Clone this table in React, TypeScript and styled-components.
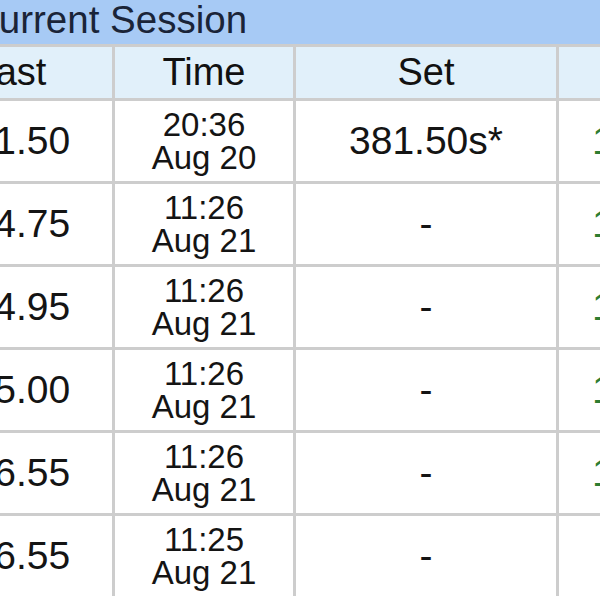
import React from "react";
import styled, { createGlobalStyle } from "styled-components";

const GlobalStyle = createGlobalStyle`
  html, body {
    margin: 0;
    padding: 0;
    background: #ffffff;
    overflow: hidden;
  }
  body {
    font-family: "Liberation Sans", Arial, Helvetica, sans-serif;
  }
`;

const Viewport = styled.div`
  width: 600px;
  height: 600px;
  overflow: hidden;
`;

const Panel = styled.section`
  margin-left: -91px;
  width: 840px;
  display: flex;
  flex-direction: column;
`;

const TitleBar = styled.div`
  height: 44px;
  line-height: 40px;
  padding-left: 62px;
  background: #a7caf5;
  color: #1a2438;
  font-size: 38.5px;
  white-space: nowrap;
`;

const Grid = styled.div`
  display: grid;
  grid-template-columns: 203px 178px 260px 220px;
  grid-auto-rows: 80px;
  grid-template-rows: 51px;
  gap: 3px;
  padding-top: 3px;
  background: #cdcdcd;
`;

const HeadCell = styled.div`
  background: #e1f0fa;
  color: #111111;
  font-size: 38px;
  display: flex;
  align-items: center;
  justify-content: center;
  white-space: nowrap;
`;

const Cell = styled.div<{ $tone?: "green" }>`
  background: #ffffff;
  color: ${(p) => (p.$tone === "green" ? "#2f7d32" : "#141414")};
  font-size: 39px;
  display: flex;
  align-items: center;
  justify-content: center;
  white-space: nowrap;
`;

const TimeCell = styled.div`
  background: #ffffff;
  color: #141414;
  font-size: 33px;
  line-height: 33px;
  display: flex;
  flex-direction: column;
  align-items: center;
  justify-content: center;
  white-space: nowrap;
`;

type Row = { last: string; time: string; date: string; set: string; gain: string };

const rows: Row[] = [
  { last: "381.50", time: "20:36", date: "Aug 20", set: "381.50s*", gain: "100.00%" },
  { last: "384.75", time: "11:26", date: "Aug 21", set: "-", gain: "100.85%" },
  { last: "384.95", time: "11:26", date: "Aug 21", set: "-", gain: "100.90%" },
  { last: "385.00", time: "11:26", date: "Aug 21", set: "-", gain: "100.92%" },
  { last: "386.55", time: "11:26", date: "Aug 21", set: "-", gain: "101.32%" },
  { last: "386.55", time: "11:25", date: "Aug 21", set: "-", gain: "" },
];

export default function App() {
  return (
    <Viewport>
      <GlobalStyle />
      <Panel>
        <TitleBar>Current Session</TitleBar>
        <Grid>
          <HeadCell>Last</HeadCell>
          <HeadCell>Time</HeadCell>
          <HeadCell>Set</HeadCell>
          <HeadCell>Gain</HeadCell>
          {rows.map((r, i) => (
            <React.Fragment key={i}>
              <Cell>{r.last}</Cell>
              <TimeCell>
                <span>{r.time}</span>
                <span>{r.date}</span>
              </TimeCell>
              <Cell>{r.set}</Cell>
              <Cell $tone="green">{r.gain}</Cell>
            </React.Fragment>
          ))}
        </Grid>
      </Panel>
    </Viewport>
  );
}
